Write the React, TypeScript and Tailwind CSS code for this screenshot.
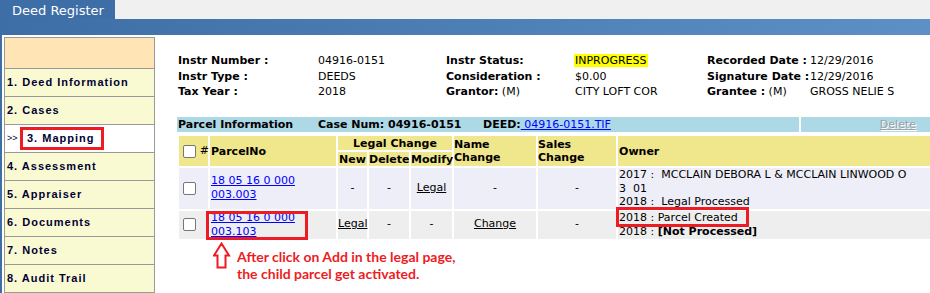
import React from 'react';

const menu = [
  '1. Deed Information',
  '2. Cases',
  '3. Mapping',
  '4. Assessment',
  '5. Appraiser',
  '6. Documents',
  '7. Notes',
  '8. Audit Trail',
];

function Box() {
  return (
    <input
      type="checkbox"
      className="appearance-none w-[13px] h-[13px] border border-[#767676] rounded-[2px] bg-white align-middle m-0"
    />
  );
}

function Sidebar() {
  return (
    <div className="ml-[2px] mt-[2px] w-[151px] border border-[#999] self-start font-['Liberation_Sans',Arial,sans-serif] font-bold text-[11px] tracking-[1px] text-[#000033]">
      <div className="h-[30px] bg-[#ffe4b5]" />
      {menu.map((m) =>
        m === '3. Mapping' ? (
          <div key={m} className="h-[28px] border-t border-[#999] bg-white flex items-center pl-[2px]">
            <span className="w-[13px] text-[9px] font-normal tracking-normal">&gt;&gt;</span>
            <span className="h-[23px] border-[3px] border-[#ed1c24] flex items-center pl-[4px] pr-[7px]">{m}</span>
          </div>
        ) : (
          <div key={m} className="h-[28px] border-t border-[#999] bg-[#fafad2] flex items-center pl-[2px]">
            {m}
          </div>
        )
      )}
    </div>
  );
}

function InfoBlock() {
  return (
    <div className="pt-[18px] pl-[1px] grid grid-cols-[140px_128px_129px_132px_1fr] leading-[15.5px] text-[11px] text-black">
      <b>Instr Number :</b>
      <span>04916-0151</span>
      <b>Instr Status:</b>
      <span><span className="bg-[#ffff00] px-[1px] -ml-[1px]">INPROGRESS</span></span>
      <div className="grid grid-cols-[103px_1fr]"><b>Recorded Date :</b><span>12/29/2016</span></div>

      <b>Instr Type :</b>
      <span>DEEDS</span>
      <b>Consideration :</b>
      <span>$0.00</span>
      <div className="grid grid-cols-[103px_1fr]"><b className="whitespace-nowrap">Signature Date :</b><span>12/29/2016</span></div>

      <b>Tax Year :</b>
      <span>2018</span>
      <span><b>Grantor:</b> (M)</span>
      <span>CITY LOFT COR</span>
      <div className="grid grid-cols-[103px_1fr]"><span><b>Grantee :</b> (M)</span><span>GROSS NELIE S</span></div>
    </div>
  );
}

function ParcelTable() {
  const th = 'bg-[#f0e68c] font-bold p-0 align-middle';
  return (
    <table className="mt-[2px] border-separate border-spacing-[2px] table-fixed w-[755px] text-[11px] text-black">
      <colgroup>
        <col className="w-[29px]" />
        <col className="w-[126px]" />
        <col className="w-[29px]" />
        <col className="w-[40px]" />
        <col className="w-[41px]" />
        <col className="w-[82px]" />
        <col className="w-[78px]" />
        <col className="w-[312px]" />
      </colgroup>
      <thead>
        <tr className="h-[14px] leading-[13px]">
          <th rowSpan={2} className={`${th} text-left pl-[4px] whitespace-nowrap`}>
            <Box /> <span className="font-normal">#</span>
          </th>
          <th rowSpan={2} className={`${th} text-left pl-[1px]`}>ParcelNo</th>
          <th colSpan={3} className={`${th} text-center`}>Legal Change</th>
          <th rowSpan={2} className={`${th} text-left`}>Name<br />Change</th>
          <th rowSpan={2} className={`${th} text-left`}>Sales<br />Change</th>
          <th rowSpan={2} className={`${th} text-left pl-[1px]`}>Owner</th>
        </tr>
        <tr className="h-[14px] leading-[13px]">
          <th className={`${th} text-center`}>New</th>
          <th className={`${th} text-center`}>Delete</th>
          <th className={`${th} text-center`}>Modify</th>
        </tr>
      </thead>
      <tbody>
        <tr className="h-[40px] bg-[#eeeef9] align-middle">
          <td className="p-0 pl-[4px]"><Box /></td>
          <td className="p-0 pl-[1px] leading-[14px]">
            <a className="text-[#0000ff] underline">18 05 16 0 000<br />003.003</a>
          </td>
          <td className="p-0 text-center">-</td>
          <td className="p-0 text-center">-</td>
          <td className="p-0 text-center"><span className="underline">Legal</span></td>
          <td className="p-0 text-center">-</td>
          <td className="p-0 text-center">-</td>
          <td className="p-0 pl-[1px] leading-[13.5px] whitespace-pre">
            {'2017 :  MCCLAIN DEBORA L & MCCLAIN LINWOOD O\n3  01\n2018 :  Legal Processed'}
          </td>
        </tr>
        <tr className="h-[27px] bg-[#eeeeee] align-middle">
          <td className="p-0 pl-[4px]"><Box /></td>
          <td className="p-0 pl-[1px] leading-[14px] relative">
            <a className="text-[#0000ff] underline">18 05 16 0 000<br />003.103</a>
            <div className="absolute -left-[4px] top-0 w-[102px] h-[29px] border-[3px] border-[#ed1c24]" />
          </td>
          <td className="p-0 text-center whitespace-nowrap"><span className="underline">Legal</span></td>
          <td className="p-0 text-center">-</td>
          <td className="p-0 text-center">-</td>
          <td className="p-0 text-center"><span className="underline">Change</span></td>
          <td className="p-0 text-center">-</td>
          <td className="p-0 pl-[1px] leading-[13.5px] relative">
            <div className="whitespace-pre">2018 : Parcel Created</div>
            <div className="whitespace-pre">2018 : <b>[Not Processed]</b></div>
            <div className="absolute -left-[2px] -top-[4px] w-[133px] h-[20px] border-[3px] border-[#ed1c24]" />
          </td>
        </tr>
      </tbody>
    </table>
  );
}

export default function App() {
  return (
    <div className="w-[930px] h-[293px] overflow-hidden bg-white font-['DejaVu_Sans',Verdana,sans-serif]">
      <div className="flex h-[19px] bg-[#f0f0f0]">
        <div className="w-[115px] bg-[#3d6ea6] text-white text-[13px] pl-[12px] leading-[21px]">Deed Register</div>
      </div>
      <div className="h-[16px] bg-linear-to-r from-[#3d6ea6] to-[#5c90c6]" />
      <div className="flex border-l-2 border-[#3d6ea6] h-[258px]">
        <Sidebar />
        <div className="ml-[22px] flex-1 min-w-0">
          <InfoBlock />
          <div className="mt-[17.5px] flex gap-[2px] h-[15px] leading-[15px] text-[11px]">
            <div className="flex-1 bg-[#add8e6] pl-[1px] flex whitespace-nowrap">
              <b className="w-[140px]">Parcel Information</b>
              <b className="w-[165px]">Case Num: 04916-0151</b>
              <b>DEED:</b>
              <a className="text-[#0000ff] underline whitespace-pre"> 04916-0151.TIF</a>
            </div>
            <div className="w-[129px] bg-[#add8e6] text-right pr-[14px]">
              <span className="underline text-[#a0a0a0] [text-shadow:1px_1px_0_#fff]">Delete</span>
            </div>
          </div>
          <ParcelTable />
          <div className="flex ml-[36px]">
            <svg width="18" height="27" viewBox="0 0 18 27" className="mt-[1px] shrink-0">
              <path d="M8.5 1.5 L16 13.5 L12.5 13.5 L12.5 25.5 L4.5 25.5 L4.5 13.5 L1 13.5 Z" fill="white" stroke="#ed1c24" strokeWidth="2" />
            </svg>
            <div className="ml-[6px] mt-[7px] text-[#ed1c24] font-bold text-[14px] leading-[17px] font-['Lato',sans-serif]">
              After click on Add in the legal page,<br />the child parcel get activated.
            </div>
          </div>
        </div>
      </div>
    </div>
  );
}
